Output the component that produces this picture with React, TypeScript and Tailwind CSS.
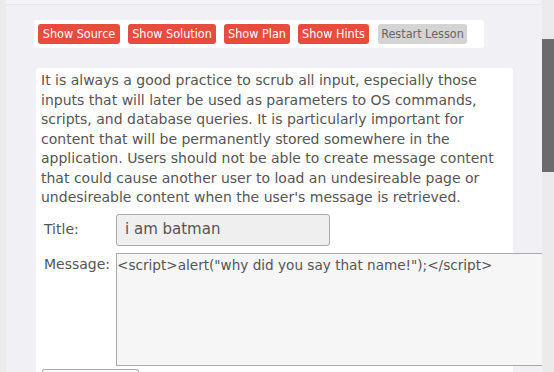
import React from 'react';

const buttons = [
  { label: 'Show Source', w: 'w-[82px]' },
  { label: 'Show Solution', w: 'w-[88px]' },
  { label: 'Show Plan', w: 'w-[66px]' },
  { label: 'Show Hints', w: 'w-[71px]' },
];

const lesson =
  "It is always a good practice to scrub all input, especially those inputs that will later be used as parameters to OS commands, scripts, and database queries. It is particularly important for content that will be permanently stored somewhere in the application. Users should not be able to create message content that could cause another user to load an undesireable page or undesireable content when the user's message is retrieved.";

export default function App() {
  return (
    <div className="flex h-[372px] w-[554px] overflow-hidden bg-[#ebebeb] font-['DejaVu_Sans',sans-serif]">
      <div className="ml-[6px] flex-1 overflow-hidden bg-[#f0f0f5]">
        <div className="h-[5px] border-b border-[#e6e6ec] bg-[#f3f3f7]" />

        <div className="ml-[28px] mt-[15px] flex h-[28px] w-[450px] items-center gap-2 rounded-[3px] bg-white px-1 font-['DejaVu_Sans_Condensed','DejaVu_Sans',sans-serif]">
          {buttons.map((b) => (
            <button
              key={b.label}
              className={`${b.w} h-5 shrink-0 whitespace-nowrap rounded-[3px] bg-[#e74c3c] text-center text-[12.5px] leading-5 text-white`}
            >
              {b.label}
            </button>
          ))}
          <button className="ml-px h-5 w-[89px] shrink-0 whitespace-nowrap rounded-[3px] bg-[#d4d4d4] text-center text-[12.5px] leading-5 text-[#666]">
            Restart Lesson
          </button>
        </div>

        <div className="ml-[30px] mt-[20px] w-[477px] rounded-t-[3px] bg-white pl-[5px] pt-[3px] text-[#555]">
          <p className="w-[470px] text-[14px] leading-[19.5px]">{lesson}</p>

          <div className="mt-[6px] flex items-center">
            <span className="w-[75px] shrink-0 pl-[3px] text-[14px]">Title:</span>
            <div className="flex h-[32px] w-[214px] shrink-0 items-center rounded-[3px] border border-[#aaa] bg-[#efefef] px-2 text-[15px] text-[#555]">
              i am batman
            </div>
          </div>

          <div className="mt-[7px] flex items-start">
            <span className="w-[75px] shrink-0 pl-[3px] pt-[1px] text-[14px]">Message:</span>
            <div className="h-[113px] w-[460px] shrink-0 border border-[#aaa] bg-[#f6f6f6] pt-[1px] text-[13.6px] text-[#555]">
              {'<script>alert("why did you say that name!");</script>'}
            </div>
          </div>

          <div className="mt-[3px] ml-[1px] h-5 w-[97px] rounded-t-[3px] border border-b-0 border-[#aaa] bg-white" />
        </div>
      </div>

      <div className="w-[12px] shrink-0 bg-[#ebebeb] pt-[39px]">
        <div className="h-[133px] w-full bg-[#6b6b6b]" />
      </div>
    </div>
  );
}
